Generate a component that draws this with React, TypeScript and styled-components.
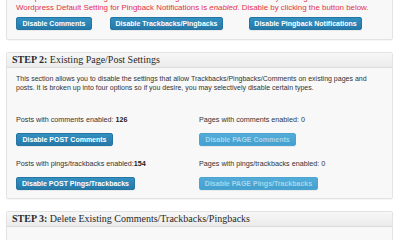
import styled, { createGlobalStyle } from 'styled-components';

const Global = createGlobalStyle`
    html, body {
        margin: 0;
        padding: 0;
        background: #ffffff;
        overflow: hidden;
    }
    body {
        font-family: "Liberation Sans", Arial, sans-serif;
        color: #333333;
    }
`;

const Page = styled.div`
    width: 400px;
    height: 240px;
    overflow: hidden;
    padding: 0 7px 0 6px;
    box-sizing: border-box;
`;

// the page is scrolled, so the first box starts above the window
const Scroller = styled.div`
    margin-top: -15px;
    display: flex;
    flex-direction: column;
    gap: 12px;
`;

const Panel = styled.section`
    background: #f8f8f8;
    border: 1px solid #e3e3e3;
    border-radius: 2px;
    box-shadow: 0 1px 1px rgba(0, 0, 0, 0.04);
`;

const Header = styled.h3`
    margin: 0;
    padding: 2px 5px 3px 5px;
    height: 15px;
    box-sizing: border-box;
    font-family: "Liberation Serif", "Times New Roman", serif;
    font-size: 10px;
    font-weight: normal;
    line-height: 10px;
    color: #2a2a2a;
    background: linear-gradient(#f7f7f7, #ebebeb);
    border-bottom: 1px solid #dcdcdc;

    b {
        font-weight: bold;
    }
`;

const Body = styled.div<{ $pad?: string }>`
    padding: ${p => p.$pad || '6px 9px 8px 9px'};
`;

const Notice = styled.p`
    margin: 0;
    font-size: 7.9px;
    line-height: 10px;
    color: #e3324a;
    white-space: nowrap;
`;

const Text = styled.p`
    margin: 0;
    font-size: 7px;
    line-height: 9px;
    color: #333;
`;

const ButtonRow = styled.div`
    display: flex;
    margin-top: 4px;
`;

const Button = styled.button<{ $disabled?: boolean; $w?: number; $ml?: number }>`
    height: 13px;
    width: ${p => (p.$w ? `${p.$w}px` : 'auto')};
    margin-left: ${p => p.$ml || 0}px;
    padding: 0;
    border: 1px solid ${p => (p.$disabled ? '#4ca5d0' : '#2575a2')};
    border-radius: 2px;
    font-family: "Liberation Sans", Arial, sans-serif;
    font-size: 7px;
    font-weight: bold;
    line-height: 11px;
    text-align: center;
    white-space: nowrap;
    color: ${p => (p.$disabled ? '#a9d6ec' : '#ffffff')};
    background: ${p => (p.$disabled
        ? 'linear-gradient(#52acd9, #43a0cf)'
        : 'linear-gradient(#3290c1, #2679a9)')};
    box-shadow: 0 1px 0 rgba(0, 0, 0, 0.06);
    cursor: pointer;
`;

const Grid = styled.div`
    display: grid;
    grid-template-columns: 183px 1fr;
    row-gap: 13px;
    margin-top: 23px;
`;

const Option = styled.div`
    display: flex;
    flex-direction: column;
    align-items: flex-start;
    gap: 8px;
`;

const Label = styled.span`
    font-size: 7.2px;
    line-height: 10px;
    color: #333;

    b {
        font-weight: bold;
        color: #222;
    }
`;

type OptionProps = {
    label: string;
    count: number;
    button: string;
    width: number;
    bold?: boolean;
    tight?: boolean;
};

const Opt = ({ label, count, button, width, bold, tight }: OptionProps) => (
    <Option>
        <Label>
            {label}{tight ? '' : ' '}{bold ? <b>{count}</b> : count}
        </Label>
        <Button $w={width} $disabled={count === 0}>{button}</Button>
    </Option>
);

const App = () => {
    return (
        <>
            <Global />
            <Page>
                <Scroller>
                    <Panel>
                        <Body $pad="7px 9px 9px 9px">
                            <Notice>
                                Wordpress Default Setting for Trackbacks/Pingbacks is <i>enabled</i>. Disable by clicking the button below.
                            </Notice>
                            <Notice>
                                Wordpress Default Setting for Pingback Notifications is <i>enabled</i>. Disable by clicking the button below.
                            </Notice>
                            <ButtonRow>
                                <Button $w={76}>Disable Comments</Button>
                                <Button $w={113} $ml={18}>Disable Trackbacks/Pingbacks</Button>
                                <Button $w={113} $ml={26}>Disable Pingback Notifications</Button>
                            </ButtonRow>
                        </Body>
                    </Panel>

                    <Panel>
                        <Header><b>STEP 2:</b> Existing Page/Post Settings</Header>
                        <Body>
                            <Text>
                                This section allows you to disable the settings that allow Trackbacks/Pingbacks/Comments on existing pages and
                                posts. It is broken up into four options so if you desire, you may selectively disable certain types.
                            </Text>
                            <Grid>
                                <Opt label="Posts with comments enabled:" count={126} bold button="Disable POST Comments" width={97} />
                                <Opt label="Pages with comments enabled:" count={0} button="Disable PAGE Comments" width={97} />
                                <Opt label="Posts with pings/trackbacks enabled:" count={154} bold tight button="Disable POST Pings/Trackbacks" width={119} />
                                <Opt label="Pages with pings/trackbacks enabled:" count={0} button="Disable PAGE Pings/Trackbacks" width={119} />
                            </Grid>
                        </Body>
                    </Panel>

                    <Panel>
                        <Header><b>STEP 3:</b> Delete Existing Comments/Trackbacks/Pingbacks</Header>
                        <Body>
                            <Text>&nbsp;</Text>
                        </Body>
                    </Panel>
                </Scroller>
            </Page>
        </>
    );
};

export default App;
